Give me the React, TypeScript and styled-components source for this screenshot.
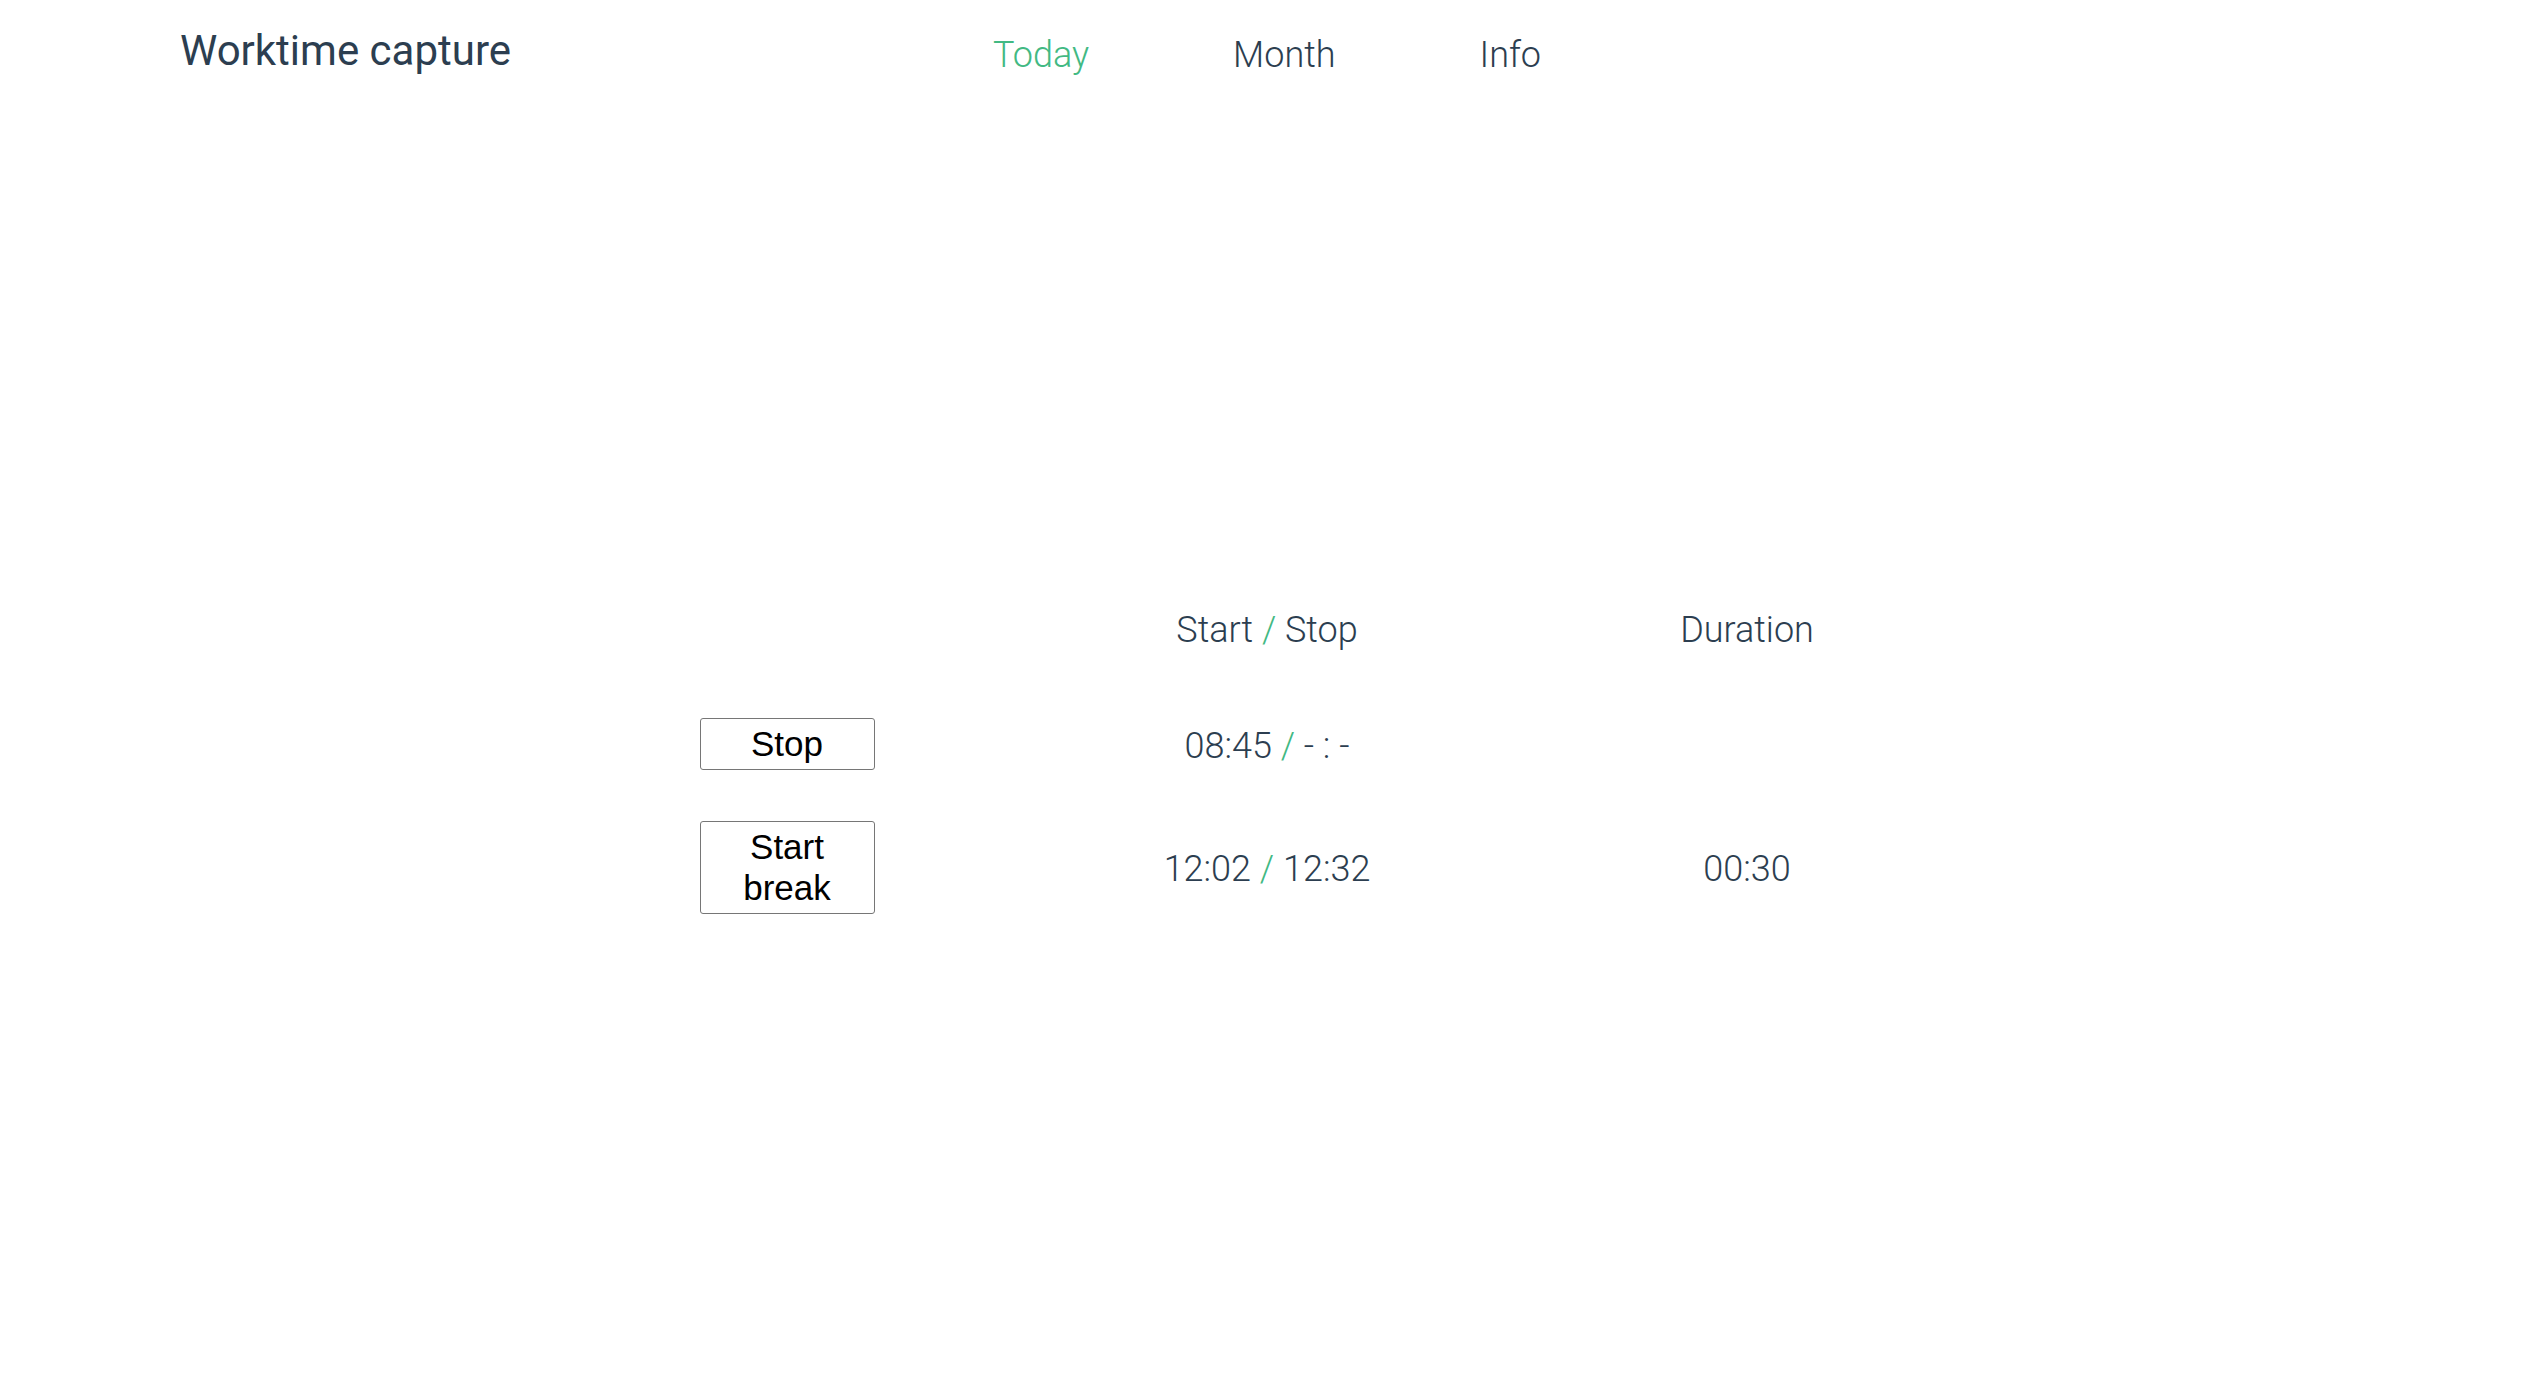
import React from 'react'
import styled, { createGlobalStyle } from 'styled-components'

const GlobalStyle = createGlobalStyle`
	html, body {
		margin: 0;
		background: #ffffff;
	}
	body {
		font-family: Roboto, "Noto Sans", sans-serif;
		color: #2c3e50;
	}
`

interface Entry {
	action: string
	start: string
	stop: string
	duration?: string
}

const entries: Entry[] = [
	{ action: 'Stop', start: '08:45', stop: '- : -' },
	{ action: 'Start break', start: '12:02', stop: '12:32', duration: '00:30' },
]

export default function App() {
	return (
		<>
			<GlobalStyle />
			<Page>
				<Header>
					<Title>Worktime capture</Title>
					<Nav>
						<NavLink href="#" $active>
							Today
						</NavLink>
						<NavLink href="#">Month</NavLink>
						<NavLink href="#">Info</NavLink>
					</Nav>
				</Header>
				<Main>
					<Grid>
						<span />
						<HeadCell>
							Start <Slash>/</Slash> Stop
						</HeadCell>
						<HeadCell>Duration</HeadCell>
						{entries.map((e) => (
							<React.Fragment key={e.start}>
								<ActionButton>{e.action}</ActionButton>
								<Cell>
									{e.start} <Slash>/</Slash> {e.stop}
								</Cell>
								<Cell>{e.duration}</Cell>
							</React.Fragment>
						))}
					</Grid>
				</Main>
			</Page>
		</>
	)
}

const Page = styled.div`
	box-sizing: border-box;
	min-height: 1379px;
	padding: 0 193px 0 180px;
`

const Header = styled.header`
	display: grid;
	grid-template-columns: 1fr auto 1fr;
	align-items: start;
	height: 100px;
`

const Title = styled.h1`
	margin: 26px 0 0;
	font-size: 42px;
	font-weight: 400;
	line-height: 49px;
	color: #2c3e50;
	white-space: nowrap;
`

const Nav = styled.nav`
	display: flex;
	gap: 144px;
	margin-top: 34px;
`

const NavLink = styled.a<{ $active?: boolean }>`
	font-size: 36px;
	font-weight: 300;
	line-height: 42px;
	text-decoration: none;
	color: ${({ $active }) => ($active ? '#42b983' : '#2c3e50')};
`

const Main = styled.main`
	display: flex;
	justify-content: center;
	padding-top: 489px;
`

const Grid = styled.div`
	display: grid;
	grid-template-columns: repeat(3, 480px);
	grid-template-rows: 78px;
	row-gap: 51px;
	align-items: center;
	justify-items: center;
`

const HeadCell = styled.div`
	padding-top: 3px;
	font-size: 36px;
	font-weight: 300;
	line-height: 42px;
	color: #2c3e50;
	white-space: nowrap;
`

const Cell = styled(HeadCell)``

const Slash = styled.span`
	color: #42b983;
`

const ActionButton = styled.button`
	box-sizing: border-box;
	width: 175px;
	padding: 4px 6px 5px;
	border: 1px solid #767676;
	border-radius: 3px;
	background: #ffffff;
	font-family: "Liberation Sans", Arial, sans-serif;
	font-size: 35px;
	line-height: 41px;
	color: #000000;
`
